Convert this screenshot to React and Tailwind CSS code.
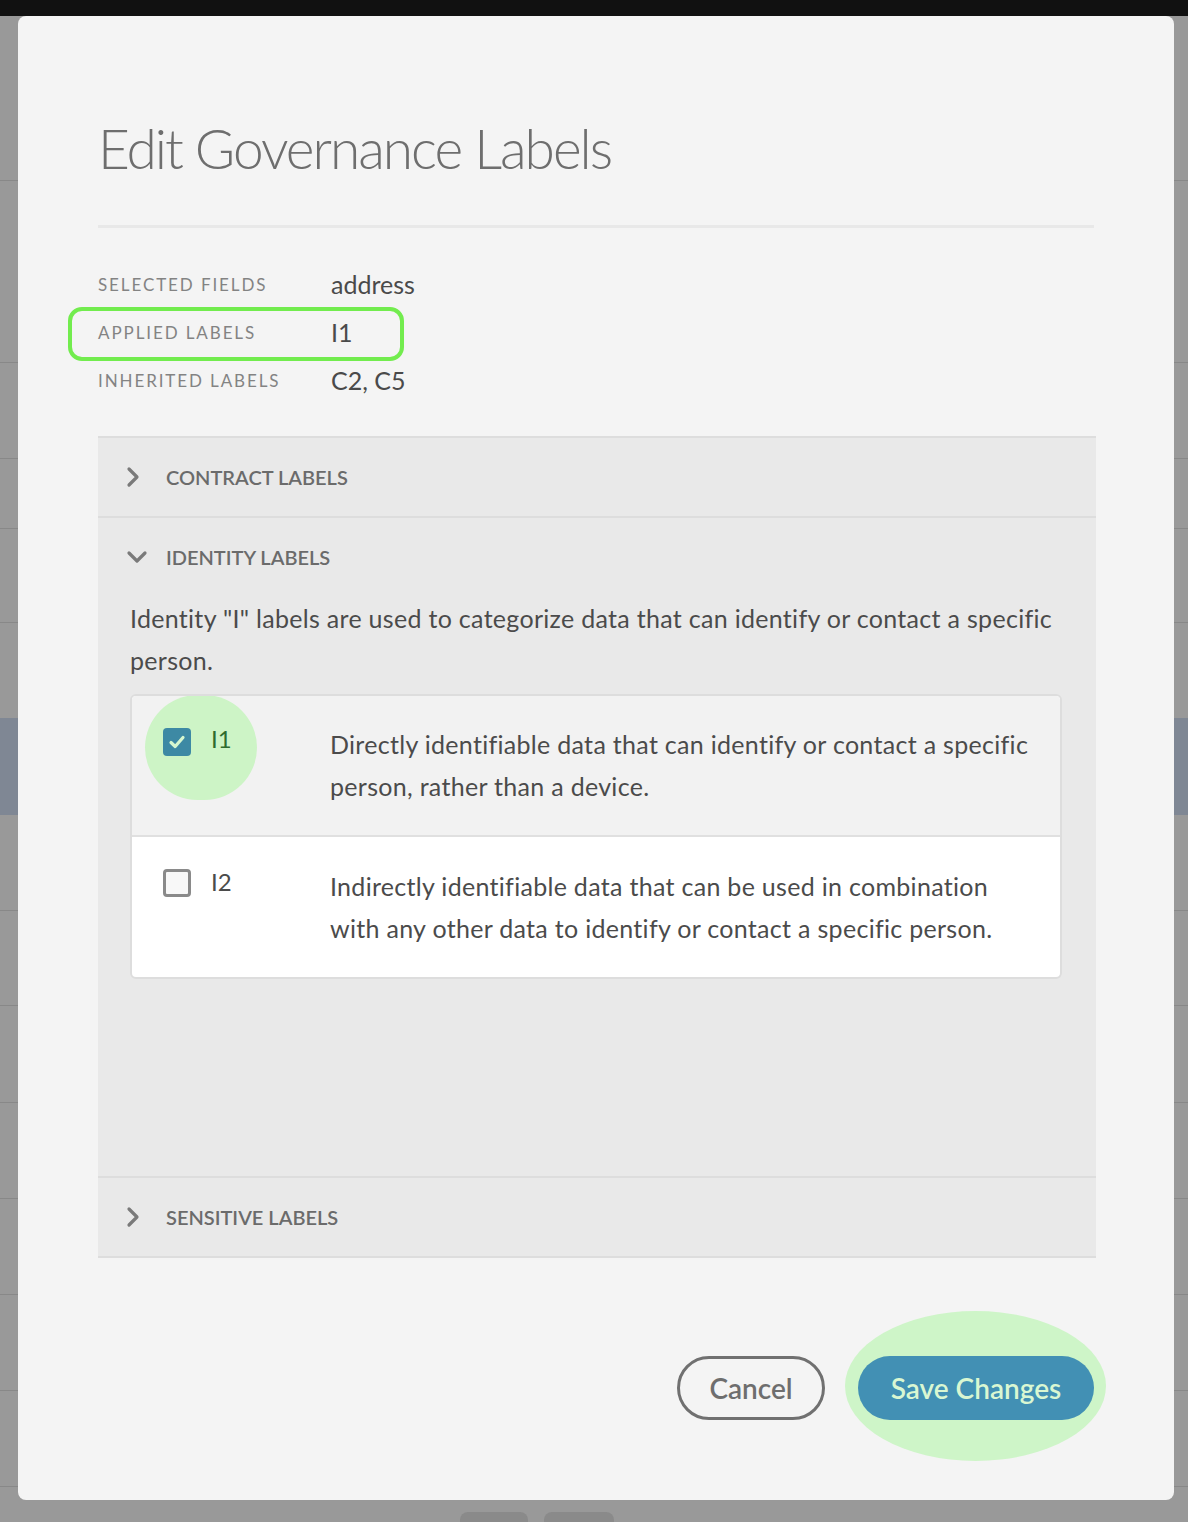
import React from "react";

const font = { fontFamily: "Lato, 'Open Sans', sans-serif" };

function Chevron({ open }) {
  return open ? (
    <svg width="22" height="14" viewBox="0 0 22 14" className="shrink-0">
      <path d="M3 3 L11 11 L19 3" fill="none" stroke="#7a7a7a" strokeWidth="3.2" strokeLinecap="round" strokeLinejoin="round" />
    </svg>
  ) : (
    <svg width="14" height="22" viewBox="0 0 14 22" className="shrink-0">
      <path d="M3 3 L11 11 L3 19" fill="none" stroke="#7a7a7a" strokeWidth="3.2" strokeLinecap="round" strokeLinejoin="round" />
    </svg>
  );
}

function AccHeader({ open, children }) {
  return (
    <div className="flex items-center h-[78px] pl-[28px]">
      <div className="w-[40px] flex items-center justify-start">
        <Chevron open={open} />
      </div>
      <span className="text-[20px] font-semibold text-[#6b6b6b] tracking-[0px]">{children}</span>
    </div>
  );
}

const body = "text-[25px] leading-[42px] tracking-[0.3px] text-[#4b4b4b]";

export default function App() {
  const bgRows = [180, 362, 458, 528, 622, 910, 1005, 1102, 1198, 1294, 1390, 1486];
  return (
    <div className="relative w-[1188px] h-[1522px] bg-[#999999] overflow-hidden" style={font}>
      {/* backdrop */}
      <div className="absolute left-0 top-0 w-full h-[16px] bg-[#111111]" />
      {bgRows.map((y) => (
        <div key={y} className="absolute left-0 w-full h-[1px] bg-[#888888]" style={{ top: y }} />
      ))}
      <div className="absolute left-0 w-full h-[97px] bg-[#7f8794]" style={{ top: 718 }} />
      <div className="absolute top-[1512px] left-[460px] w-[68px] h-[20px] rounded-[8px] bg-[#8a8a8a]" />
      <div className="absolute top-[1512px] left-[544px] w-[70px] h-[20px] rounded-[8px] bg-[#8a8a8a]" />

      {/* modal */}
      <div className="absolute left-[18px] top-[16px] w-[1156px] h-[1484px] bg-[#f4f4f4] rounded-[8px] px-[80px] pt-[92px]">
        <h1 className="text-[55px] font-light text-[#6e6e6e] leading-[80px] tracking-[-2px]">Edit Governance Labels</h1>
        <div className="mt-[37px] h-[3px] w-[996px] bg-[#e8e8e8]" />

        <div className="mt-[33px] flex flex-col">
          {[
            ["SELECTED FIELDS", "address"],
            ["APPLIED LABELS", "I1"],
            ["INHERITED LABELS", "C2, C5"],
          ].map(([k, v], i) => (
            <div key={k} className="relative flex items-center h-[48px]">
              {i === 1 && (
                <div className="absolute left-[-30px] top-[-2px] w-[336px] h-[54px] rounded-[14px] border-[4px] border-[#72ec4e]" />
              )}
              <span className="w-[233px] text-[17px] tracking-[1.9px] text-[#838383]">{k}</span>
              <span className="text-[25px] text-[#4a4a4a]">{v}</span>
            </div>
          ))}
        </div>

        <div className="mt-[31px] w-[998px] bg-[#e9e9e9] border-t-[2px] border-b-[2px] border-[#dddddd]">
          <AccHeader open={false}>CONTRACT LABELS</AccHeader>
          <div className="border-t-[2px] border-[#dddddd]">
            <AccHeader open={true}>IDENTITY LABELS</AccHeader>
            <div className="px-[32px] pb-[197px]">
              <p className={`${body} mt-[1px]`}>
                Identity "I" labels are used to categorize data that can identify or contact a specific person.
              </p>
              <div className="mt-[13px] w-[932px] rounded-[6px] border-[2px] border-[#dddddd] bg-white overflow-hidden">
                <div className="relative flex bg-[#f2f2f2] border-b-[2px] border-[#e0e0e0] h-[141px] pt-[27px]">
                  <div className="absolute left-[13px] top-[-1px] w-[112px] h-[105px] rounded-full bg-[#cdf4c6]" />
                  <div className="relative w-[198px] flex items-start pl-[31px] pt-[5px]">
                    <div className="w-[28px] h-[28px] rounded-[4px] bg-[#3d89a4] flex items-center justify-center">
                      <svg width="20" height="20" viewBox="0 0 20 20">
                        <path d="M4 10.5 L8.2 14.5 L16 5.5" fill="none" stroke="#d6f7cf" strokeWidth="3.2" strokeLinecap="round" strokeLinejoin="round" />
                      </svg>
                    </div>
                    <span className="ml-[20px] -mt-[4px] text-[24px] text-[#2f6b2f] leading-[30px]">I1</span>
                  </div>
                  <p className={`w-[700px] ${body}`}>
                    Directly identifiable data that can identify or contact a specific person, rather than a device.
                  </p>
                </div>
                <div className="flex h-[140px] pt-[28px]">
                  <div className="w-[198px] flex items-start pl-[31px] pt-[4px]">
                    <div className="w-[28px] h-[28px] rounded-[4px] border-[3px] border-[#8a8a8a] bg-[#f8f8f8]" />
                    <span className="ml-[20px] -mt-[2px] text-[24px] text-[#4b4b4b] leading-[30px]">I2</span>
                  </div>
                  <p className={`w-[700px] ${body}`}>
                    Indirectly identifiable data that can be used in combination with any other data to identify or contact a specific person.
                  </p>
                </div>
              </div>
            </div>
          </div>
          <div className="border-t-[2px] border-[#dddddd]">
            <AccHeader open={false}>SENSITIVE LABELS</AccHeader>
          </div>
        </div>

        <div className="mt-[98px] flex justify-end items-center gap-[33px] w-[996px]">
          <button className="h-[64px] w-[148px] rounded-full border-[3px] border-[#707070] text-[28px] font-semibold text-[#6e6e6e]">
            Cancel
          </button>
          <div className="relative">
            <div className="absolute left-[-13px] top-[-45px] w-[261px] h-[150px] rounded-[50%] bg-[#cef5c8]" />
            <button className="relative h-[64px] w-[236px] rounded-full bg-[#4290b4] text-[28px] font-semibold text-[#d9f7d2]">
              Save Changes
            </button>
          </div>
        </div>
      </div>
    </div>
  );
}
